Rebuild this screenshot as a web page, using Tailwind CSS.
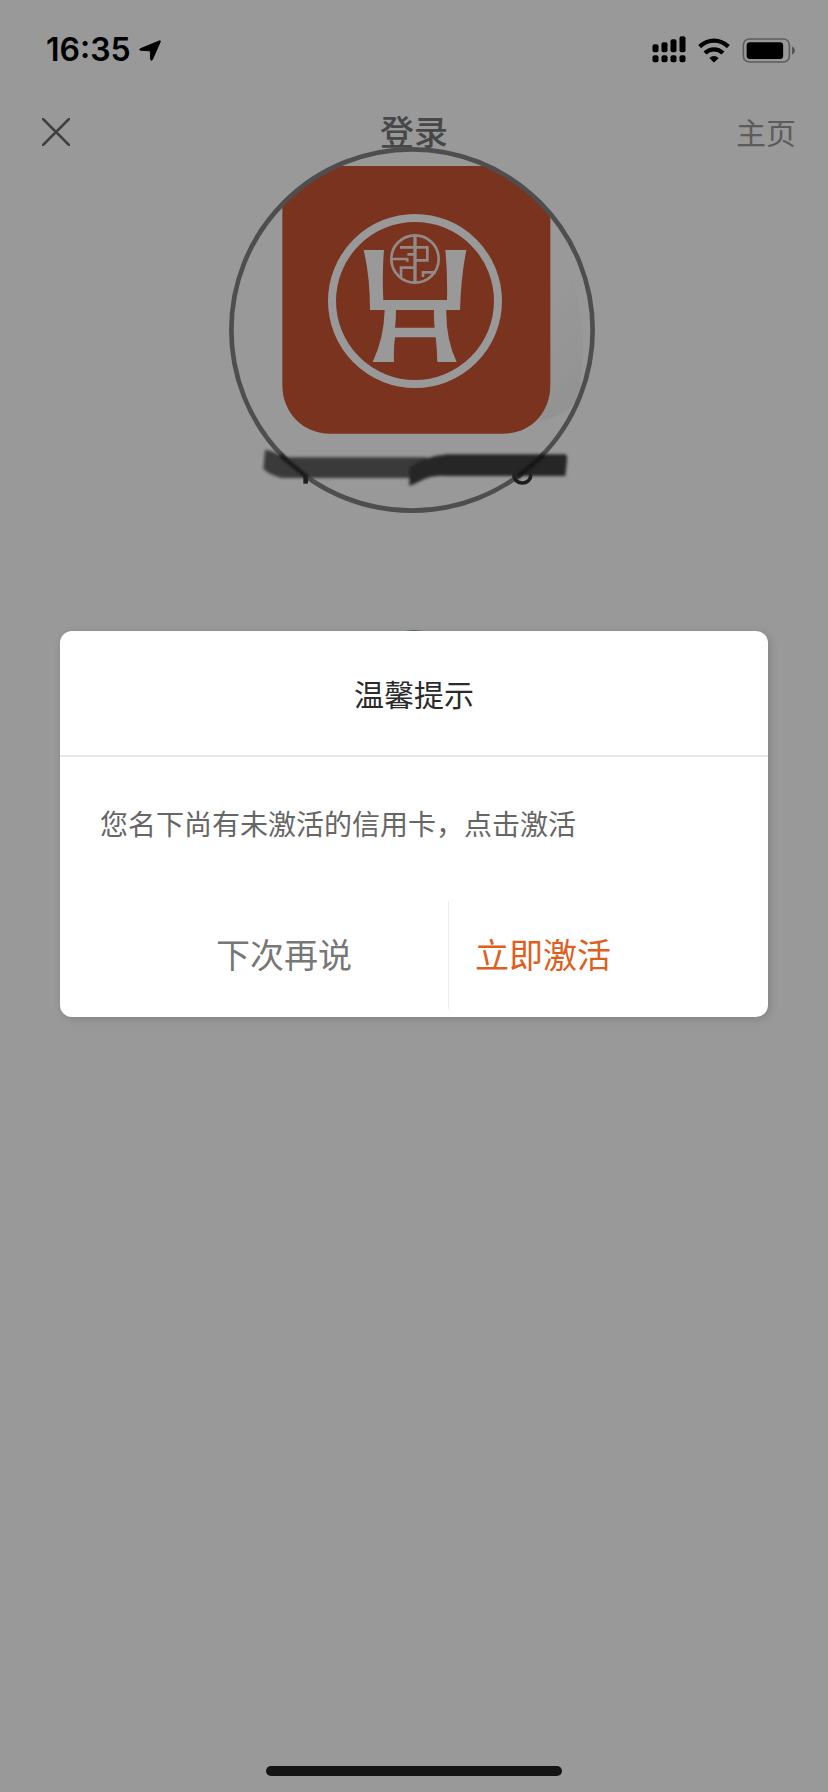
<!DOCTYPE html>
<html lang="zh-CN">
<head>
    <meta charset="UTF-8">
    <meta name="viewport" content="width=device-width, initial-scale=1.0">
    <title>登录</title>
    <script src="https://cdn.jsdelivr.net/npm/@tailwindcss/browser@4"></script>
</head>
<body class="relative min-h-screen bg-white font-['Noto_Sans_CJK_SC',sans-serif]">
    <!-- Status bar, stays above the mask -->
    <div class="relative z-20 flex h-25 items-center justify-between pl-11.5 pr-8 text-black">
        <div class="flex items-center gap-2">
            <span class="font-['Inter',sans-serif] text-[32px] leading-none font-semibold">16:35</span>
            <svg class="h-[21px] w-[22px]" viewBox="416 117 66 64">
                <path d="M419 144L477 120Q482 118 480 123L456 177Q453 182 451 176L450 152Q450 150 447 150L420 148Q415 147 419 144Z" stroke="#000" stroke-width="3"/>
            </svg>
        </div>
        <div class="flex items-center gap-3">
            <svg class="h-[28px] w-[34px]" viewBox="716 104 101 84">
                <rect x="717" y="129" width="18" height="24" rx="6"/>
                <rect x="744" y="123" width="18" height="30" rx="6"/>
                <rect x="771" y="114" width="18" height="39" rx="6"/>
                <rect x="798" y="105" width="18" height="48" rx="6"/>
                <rect x="717" y="162" width="18" height="21" rx="6"/>
                <rect x="744" y="162" width="18" height="21" rx="6"/>
                <rect x="771" y="162" width="18" height="21" rx="6"/>
                <rect x="798" y="162" width="18" height="21" rx="6"/>
            </svg>
            <svg class="h-[25px] w-[32px]" viewBox="850 110 96 75">
                <g fill="none" stroke="#000" stroke-width="13">
                    <path d="M855 136Q874 118 898 118Q922 118 941 136"/>
                    <path d="M871 155Q883 144 898 144Q913 144 925 155"/>
                </g>
                <path d="M884 170Q898 158 912 170L900 182Q898 184 896 182Z"/>
            </svg>
            <svg class="h-[25px] w-[54px]" viewBox="980 110 162 76">
                <rect x="983" y="113" width="140" height="70" rx="18" fill="none" stroke="#000" stroke-opacity=".4" stroke-width="5"/>
                <rect x="993" y="123" width="111" height="51" rx="10"/>
                <path d="M1131 136Q1140 140 1140 149Q1140 157 1131 161Z" fill-opacity=".45"/>
            </svg>
        </div>
    </div>

    <!-- Nav -->
    <header class="grid h-16 grid-cols-[1fr_auto_1fr] items-center px-8">
        <button class="justify-self-start px-2.5" aria-label="关闭">
            <svg class="size-7" viewBox="0 0 28 28" fill="none" stroke="#6c6c6c" stroke-width="2.5" stroke-linecap="round">
                <path d="M1 1L27 27M27 1L1 27"/>
            </svg>
        </button>
        <h1 class="pb-0.5 text-[34px] leading-none font-medium text-[#777]">登录</h1>
        <a href="#" class="justify-self-end pb-0.5 text-[30px] leading-none text-[#9a9a9a]">主页</a>
    </header>

    <!-- Avatar -->
    <main class="-mt-4 flex flex-col items-center">
        <svg class="size-[370px] overflow-visible" viewBox="27 54 1110 1110">
            <defs>
                <clipPath id="avatarClip"><circle cx="576" cy="600" r="542"/></clipPath>
                <linearGradient id="shade" x1="0" y1="0" x2="0.3" y2="1">
                    <stop offset="0" stop-color="#fff"/>
                    <stop offset="1" stop-color="#f5f5f5"/>
                </linearGradient>
                <filter id="soft" x="-10%" y="-30%" width="120%" height="160%"><feGaussianBlur stdDeviation="4"/></filter>
            </defs>
            <g clip-path="url(#avatarClip)">
                <path d="M985 450H1060Q1110 640 1070 810Q1030 860 960 875Z" fill="url(#shade)"/>
                <path d="M187 108H991V765C991 850 930 911 850 911H330C250 911 187 850 187 765Z" fill="#cb5535"/>
            </g>
            <circle cx="585" cy="513" r="249" fill="none" stroke="#fff" stroke-width="24"/>
            <!-- tripod -->
            <g fill="#fff">
                <path d="M431 360H492Q486 430 490 510H681Q683 430 676 360H739Q723 440 720 540H679Q677 625 710 696H652Q651 655 647 622H525Q520 660 522 696H458Q492 625 494 540H450Q450 440 431 360ZM528 540Q528 570 525 593H644Q641 570 642 540Z" fill-rule="evenodd"/>
            </g>
            <!-- seal -->
            <g fill="none" stroke="#f4e6e2" stroke-width="8">
                <circle cx="585" cy="387" r="71"/>
                <path d="M585 316V458" stroke-width="10"/>
                <path d="M540 352H622V391H585M515 387H565M562 373H585M562 387V395M543 441V413H585M609 441V427H648"/>
            </g>
            <circle cx="576" cy="600" r="542" fill="none" stroke="#828282" stroke-width="14"/>
            <!-- strokes over the account name -->
            <path d="M257 1025V1061" stroke="#333" stroke-width="14"/>
            <ellipse cx="907" cy="1037" rx="25" ry="22" fill="none" stroke="#333" stroke-width="11"/>
            <g filter="url(#soft)">
                <path d="M135 960Q150 957 190 982H620V1044H185Q150 1036 130 1017Z" fill="#626262"/>
                <path d="M568 1068V1012Q610 980 680 973H1036Q1043 975 1041 990L1036 1038H680Q630 1034 596 1056Z" fill="#404040"/>
                <path d="M180 975L262 1042M972 975L890 1042" stroke="#222" stroke-width="14"/>
            </g>
        </svg>
        <div class="mt-28 size-20 rounded-full bg-[#6fb4c4]"></div>
    </main>

    <!-- Mask and dialog -->
    <div class="absolute inset-0 z-10 flex items-center bg-black/40 px-15 pb-36">
        <section role="dialog" aria-modal="true" aria-labelledby="dialogTitle" class="w-full overflow-hidden rounded-xl bg-white pb-2 shadow-[2px_2px_8px_rgba(0,0,0,0.15)]">
            <h2 id="dialogTitle" class="border-b-2 border-[#e6e6e6] py-12 text-center text-[30px] leading-7 text-[#2b2b2b]">温馨提示</h2>
            <p class="px-10 pt-11.5 pb-14.5 text-[28px] leading-10 text-[#666]">您名下尚有未激活的信用卡，点击激活</p>
            <div class="grid h-27 grid-cols-[389fr_319fr] text-[34px] leading-none">
                <button class="border-r border-[#ececec] pr-24 pb-0.5 text-right text-[#777]">下次再说</button>
                <button class="pb-0.5 pl-6.5 text-left text-[#df5f1e]">立即激活</button>
            </div>
        </section>
    </div>

    <!-- Home indicator -->
    <div class="absolute inset-x-0 bottom-4 z-20 flex justify-center">
        <div class="h-2.5 w-74 rounded-full bg-[#141414]"></div>
    </div>
</body>
</html>
